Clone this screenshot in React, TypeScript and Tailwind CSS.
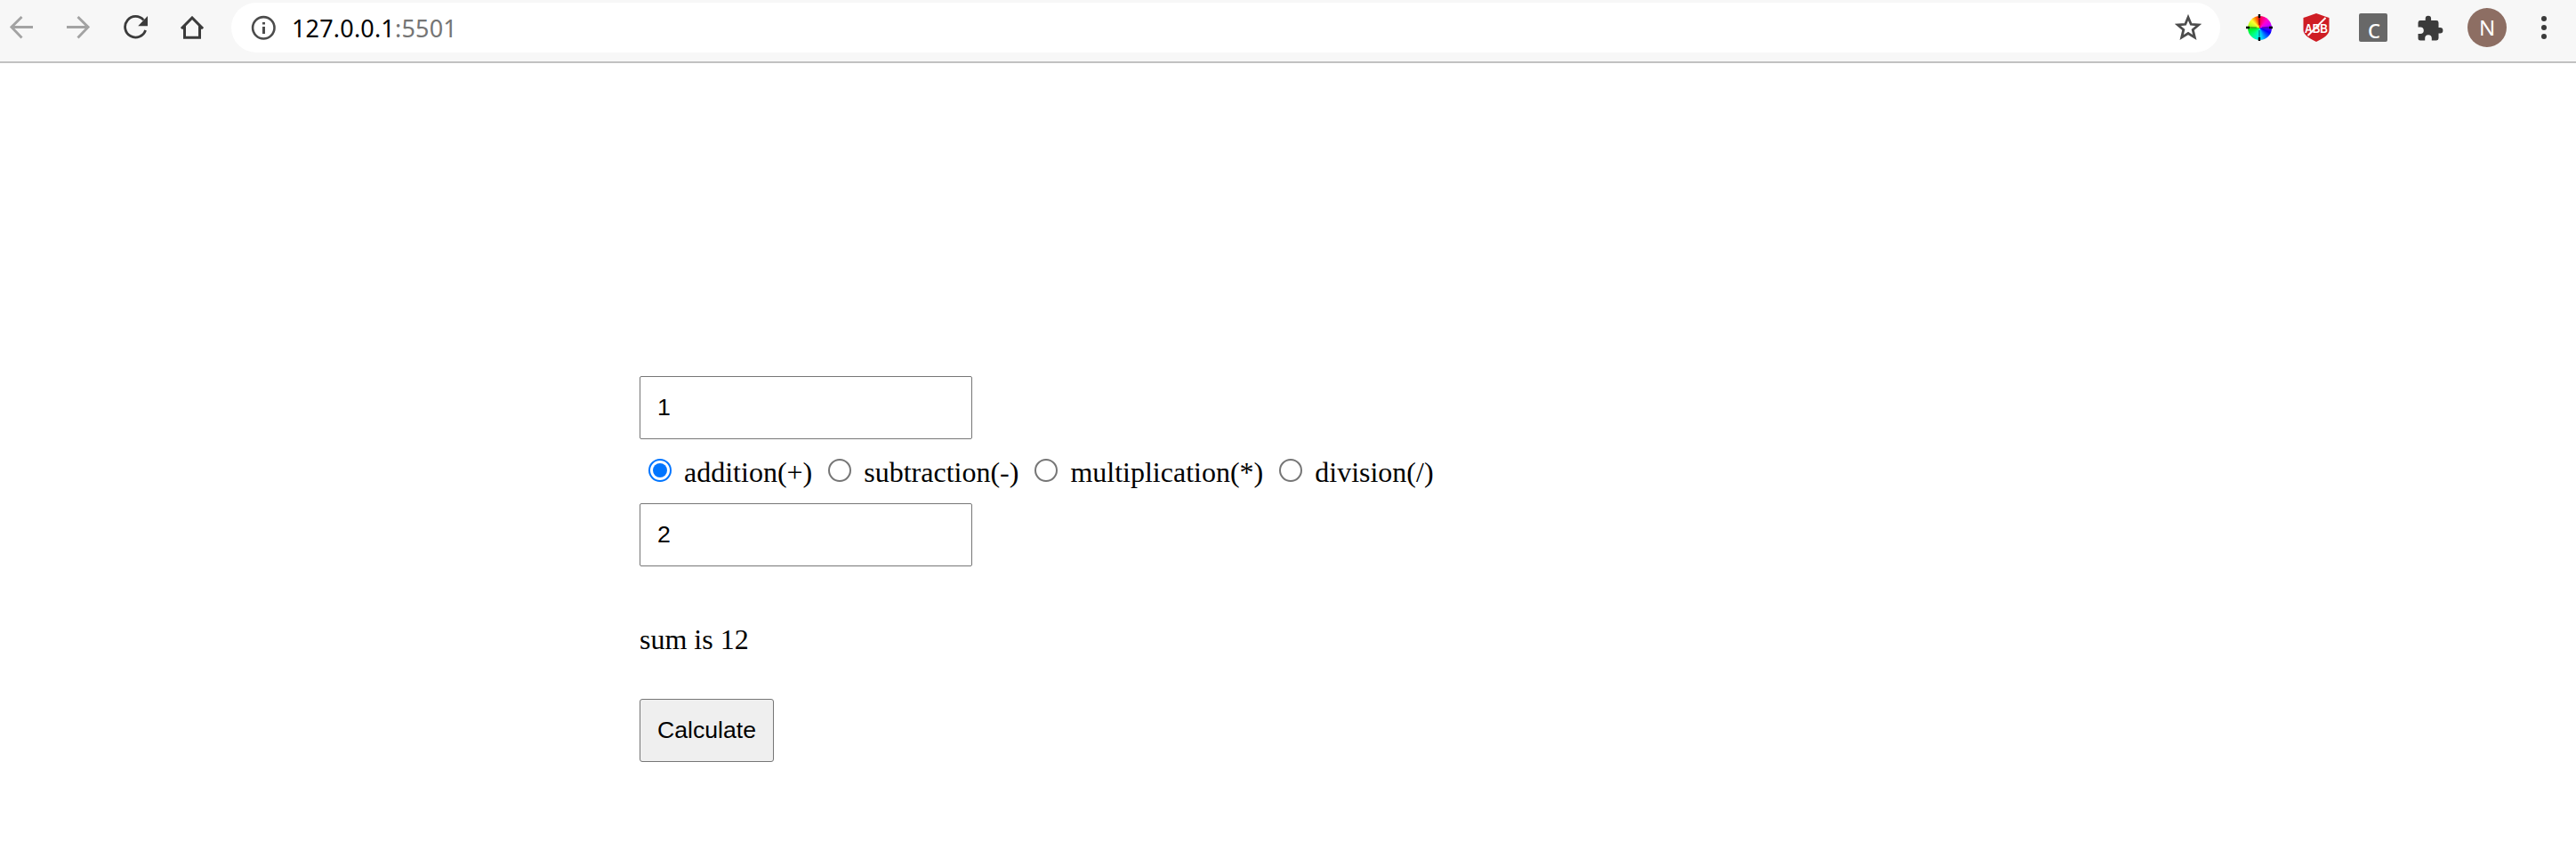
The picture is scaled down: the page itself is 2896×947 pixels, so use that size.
import React, { useState } from "react";

const operations = ["addition(+)", "subtraction(-)", "multiplication(*)", "division(/)"];

function Toolbar() {
  return (
    <header className="flex h-[71px] items-start border-b-2 border-[#c1c1c1] bg-[#f7f7f7] pt-[3px]">
      <div className="flex h-14 w-[260px] shrink-0 items-center pl-[11px]">
        <svg width="26" height="26" viewBox="0 0 26 26" fill="none" stroke="#a3a3a3" strokeWidth="2.9" className="shrink-0">
          <path d="M26 12.500H2M13.5 1L1.900 12.500l11.600 12" />
        </svg>
        <svg width="26" height="26" viewBox="0 0 26 26" fill="none" stroke="#a3a3a3" strokeWidth="2.9" className="ml-[38px] shrink-0">
          <path d="M0 12.500h24M12.5 1l11.600 11.500-11.600 12" />
        </svg>
        <svg width="28" height="28" viewBox="0 0 28 28" fill="none" className="ml-[38px] shrink-0">
          <path d="M22.4 5.6A11.8 11.8 0 1 0 24.6 17" stroke="#3b3b3b" strokeWidth="2.8" />
          <path d="M27 1v11.2H16.2z" fill="#3b3b3b" />
        </svg>
        <svg width="26" height="26" viewBox="0 0 26 26" fill="none" stroke="#3b3b3b" strokeWidth="3" className="ml-9 shrink-0">
          <path d="M1 14.2L13 2l12 12.2M4.500 11v13.300h17V11" strokeLinejoin="miter" />
        </svg>
      </div>
      <div className="flex h-14 w-[2236px] shrink-0 items-center rounded-full bg-white pl-[22px] pr-[21px]">
        <svg width="28" height="28" viewBox="0 0 28 28" className="shrink-0">
          <circle cx="14.3" cy="14.3" r="12.2" fill="none" stroke="#4c4c4c" strokeWidth="2.6" />
          <path d="M13 8h3v2.6h-3zM13 13h3v8h-3z" fill="#4c4c4c" />
        </svg>
        <div className="ml-[18px] flex-1 whitespace-nowrap font-['Noto_Sans',sans-serif] text-[27px] leading-[37px] tracking-[0.18px] text-black">
          127.0.0.1<span className="text-[#757575]">:5501</span>
        </div>
        <svg width="30" height="30" viewBox="0 0 30 30" className="shrink-0">
          <path d="M15 3.500l3.200 7.800 8.500.7-6.500 5.400 2.100 8.700-7.300-4.600-7.300 4.600 2.100-8.700L3.300 12l8.500-.7z" fill="none" stroke="#4c4c4c" strokeWidth="2.8" />
        </svg>
      </div>
      <div className="flex h-14 items-center pl-[29px]">
        <div className="relative size-[30px]">
          <div className="absolute inset-[1.5px] rounded-full bg-[conic-gradient(#ff0040,#ff00d4_12%,#d000ff_20%,#5000ff_26%,#0000ff_32%,#008cff_42%,#00f0ff_50%,#00ff80_63%,#00f020_73%,#b8ff20_79%,#ffff30_87%,#ff7800_94%,#ff0020)]" />
          <svg width="30" height="30" viewBox="0 0 30 30" className="absolute inset-0">
            <path d="M15 0v4M15 26v4M0 15h4M26 15h4" stroke="#000" strokeWidth="2.4" />
            <path d="M15 4v8M15 18v8M4 15h8M18 15h8" stroke="#000" strokeOpacity=".5" strokeWidth="1.2" />
          </svg>
        </div>
        <svg width="30" height="34" viewBox="0 0 30 34" className="ml-[34px] overflow-visible">
          <path d="M15 1c5 1.700 9 3.200 14.500 5v14c0 5-6.500 9-14.500 13C7 29 .5 25 .5 20V6C6 4.200 10 2.700 15 1z" fill="#cf1d24" />
          <text x="2" y="22.5" fontFamily="Liberation Sans" fontWeight="bold" fontSize="15" textLength="26" lengthAdjust="spacingAndGlyphs" fill="#fff">ABB</text>
          <path d="M5.500 26L25.500 6" stroke="#fff" strokeWidth="2" />
        </svg>
        <div className="ml-[33px] flex size-8 items-center justify-center rounded-[2px] bg-[#686868] pl-[2px] pt-[5px] font-['Noto_Sans',sans-serif] text-[22px] font-medium leading-none text-white">C</div>
        <svg width="29" height="29" viewBox="0 0 29 29" className="ml-[34px]">
          <path d="M3 6h5.700V4a3.200 3.200 0 0 1 6.400 0v2h6q2.400 0 2.400 2.400V14h1.700a3.200 3.200 0 0 1 0 6.400h-1.700v5.700q0 2.400-2.400 2.400h-5.300V26a3.800 3.800 0 0 0-7.600 0v2.500H3Q.5 28.500.5 26v-5H3a3.800 3.800 0 0 0 0-7.600H.5V8.400Q.5 6 3 6z" fill="#3b3b3b" />
        </svg>
        <div className="ml-[27px] flex size-11 items-center justify-center rounded-full bg-[#8d6e63] font-['Noto_Sans',sans-serif] text-[24px] leading-none text-white">N</div>
        <svg width="6" height="26" viewBox="0 0 6 26" fill="#3b3b3b" className="ml-[39px]">
          <circle cx="3" cy="3" r="3" />
          <circle cx="3" cy="13" r="3" />
          <circle cx="3" cy="23" r="3" />
        </svg>
      </div>
    </header>
  );
}

const fieldClass =
  "block h-[71px] w-[374px] rounded-[2px] border border-[#767676] bg-white pl-[19px] pr-5 font-['Liberation_Sans',sans-serif] text-[26.667px] text-black outline-none";

export default function App() {
  const [first, setFirst] = useState("1");
  const [second, setSecond] = useState("2");
  const [operation, setOperation] = useState(operations[0]);

  return (
    <div className="h-[947px] w-[2896px] overflow-hidden bg-white">
      <Toolbar />
      <main className="flex flex-col items-start pl-[719px] pt-[352px] font-['Liberation_Serif',serif] text-[32px] leading-9 text-black">
        <input className={fieldClass} value={first} onChange={(e) => setFirst(e.target.value)} />
        <div className="flex h-[72px] items-start whitespace-nowrap pt-[19px]">
          {operations.map((name) => (
            <label key={name} className="mr-2 flex items-start">
              <input
                type="radio"
                name="operation"
                checked={operation === name}
                onChange={() => setOperation(name)}
                className="peer sr-only"
              />
              <span className="ml-2.5 mr-3.5 mt-[3px] flex size-[26px] items-center justify-center rounded-full border-2 border-[#767676] before:size-4 before:rounded-full peer-checked:border-[#0075ff] peer-checked:before:bg-[#0075ff]" />
              <span className="leading-[37px]">{name}</span>
            </label>
          ))}
        </div>
        <input className={fieldClass} value={second} onChange={(e) => setSecond(e.target.value)} />
        <p className="mt-16">sum is 12</p>
        <button className="mt-[49px] h-[71px] w-[151px] rounded-[3px] border border-[#767676] bg-[#efefef] pb-[2px] font-['Liberation_Sans',sans-serif] text-[26.667px]">
          Calculate
        </button>
      </main>
    </div>
  );
}
